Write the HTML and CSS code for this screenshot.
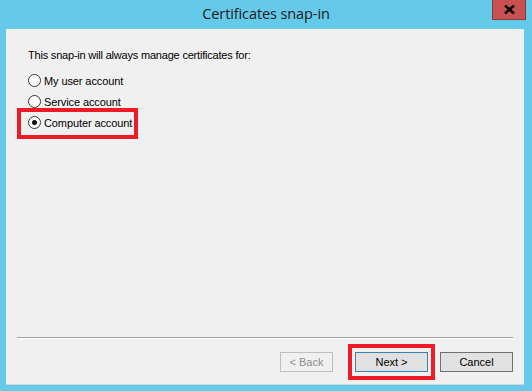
FILE: index.html
```html
<!DOCTYPE html>
<html>
<head>
<meta charset="utf-8">
<link rel="stylesheet" href="styles.css">
</head>
<body>
<div class="window">
  <div class="titlebar">
    <span class="title">Certificates snap-in</span>
    <span class="close"><svg width="11" height="9" viewBox="0 0 11 9"><path d="M1 0.5 L10 8.5 M10 0.5 L1 8.5" stroke="#000" stroke-width="2.4" fill="none"/></svg></span>
  </div>
  <div class="panel">
    <p class="lead">This snap-in will always manage certificates for:</p>
    <div class="options">
      <div class="row"><span class="radio"></span><span>My user account</span></div>
      <div class="row"><span class="radio"></span><span>Service account</span></div>
      <div class="row mark"><span class="radio checked"></span><span>Computer account</span></div>
    </div>
    <div class="spacer"></div>
    <div class="sep"></div>
    <div class="buttons">
      <button class="btn disabled">&lt; Back</button>
      <button class="btn default hl">Next &gt;</button>
      <button class="btn cancel">Cancel</button>
    </div>
  </div>
</div>
</body>
</html>
```

FILE: styles.css
```css
html, body {
  margin: 0;
  padding: 0;
}
body {
  width: 532px;
  height: 391px;
  background: #65c9ea;
  font-family: "Liberation Sans", Arial, sans-serif;
  font-size: 11px;
  color: #000;
  overflow: hidden;
}
.window {
  display: flex;
  flex-direction: column;
  height: 391px;
}
.titlebar {
  position: relative;
  height: 29px;
  display: flex;
  align-items: center;
  justify-content: center;
}
.title {
  font-family: "Open Sans", "Noto Sans", sans-serif;
  font-size: 14.5px;
  color: #1a1a1a;
  margin-top: -2px;
  letter-spacing: -0.1px;
}
.close {
  position: absolute;
  left: 492px;
  top: 0;
  width: 32px;
  height: 19px;
  background: #c75050;
  border: 1px solid #8c3a3a;
  border-top: none;
  display: flex;
  align-items: center;
  justify-content: center;
}
.panel {
  margin: 0 8px 0 6px;
  height: 356px;
  background: #f0f0f0;
  display: flex;
  flex-direction: column;
  padding: 20px 11px 12px 11px;
  box-sizing: border-box;
  border-bottom: 1px solid #d6d6d6;
}
.lead {
  margin: 0 0 0 11px;
  line-height: 13px;
  letter-spacing: -0.2px;
}
.options {
  margin-top: 8px;
  display: flex;
  flex-direction: column;
  align-items: flex-start;
}
.row {
  height: 21px;
  display: flex;
  align-items: center;
  gap: 3px;
  padding-left: 11px;
  letter-spacing: -0.1px;
}
.radio {
  width: 11px;
  height: 11px;
  border: 1px solid #333;
  border-radius: 50%;
  background: #fff;
  display: flex;
  align-items: center;
  justify-content: center;
}
.radio.checked::after {
  content: "";
  width: 5px;
  height: 5px;
  border-radius: 50%;
  background: #111;
}
.mark {
  position: relative;
}
.mark::before {
  content: "";
  position: absolute;
  left: 0;
  right: -6px;
  top: -4px;
  bottom: -6px;
  border: 4px solid #ed1c24;
}
.spacer {
  flex: 1;
}
.sep {
  height: 1px;
  background: #a0a0a0;
  border-bottom: 1px solid #fff;
}
.buttons {
  margin-top: 13px;
  display: flex;
  justify-content: flex-end;
  gap: 0;
}
.btn {
  width: 73px;
  height: 20px;
  box-sizing: border-box;
  font-family: "Liberation Sans", Arial, sans-serif;
  font-size: 11px;
  background: #e1e1e1;
  border: 1px solid #707070;
  color: #000;
  padding: 0;
  margin: 0;
}
.btn.disabled {
  width: 53px;
  color: #8d8d8d;
  background: #f0f0f0;
  border-color: #bfbfbf;
  margin-right: 22px;
}
.btn.default {
  border-color: #3c7fb1;
  margin-right: 12px;
}
.hl {
  position: relative;
}
.hl::before {
  content: "";
  position: absolute;
  left: -8px;
  right: -8px;
  top: -9px;
  bottom: -9px;
  border: 4px solid #ed1c24;
}
```
